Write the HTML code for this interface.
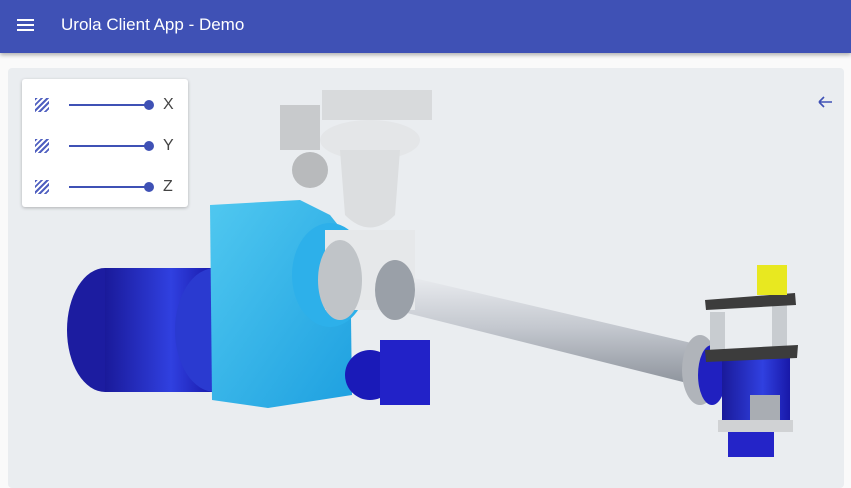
<!DOCTYPE html>
<html><head><meta charset="utf-8"><style>
*{margin:0;padding:0;box-sizing:border-box}
body{width:851px;height:472px;overflow:hidden;background:#fafafa;font-family:"Liberation Sans",sans-serif;position:relative}
.hdr{position:absolute;left:0;top:0;width:851px;height:53px;background:#3f51b5;box-shadow:0 2px 4px rgba(0,0,0,.3);color:#fff}
.hdr .t{position:absolute;left:61px;top:15px;font-size:17px}
.card{position:absolute;left:8px;top:68px;width:836px;height:420px;background:#eaedf0;border-radius:4px}
.panel{position:absolute;left:22px;top:79px;width:166px;height:128px;background:#fff;border-radius:3px;box-shadow:0 1px 3px rgba(0,0,0,.25)}
.row{position:absolute;left:0;width:166px;height:20px}
.hatch{position:absolute;left:13px;top:3px;width:14px;height:14px;background:repeating-linear-gradient(135deg,#5060c0 0 2px,transparent 2px 4px)}
.line{position:absolute;left:47px;top:9px;width:80px;height:2px;background:#3f51b5}
.knob{position:absolute;left:122px;top:5px;width:10px;height:10px;border-radius:50%;background:#3f51b5}
.lbl{position:absolute;left:141px;top:1px;font-size:16px;color:#444}
</style></head><body>
<div class="hdr">
<svg style="position:absolute;left:17px;top:18px" width="18" height="14"><rect y="1" width="17" height="2" fill="#fff"/><rect y="6" width="17" height="2" fill="#fff"/><rect y="11" width="17" height="2" fill="#fff"/></svg>
<div class="t">Urola Client App - Demo</div></div>
<div class="card"></div>
<svg style="position:absolute;left:0;top:0" width="851" height="472">
<defs>
<linearGradient id="sh" x1="0" y1="0" x2="0" y2="1"><stop offset="0" stop-color="#eef0f3"/><stop offset=".5" stop-color="#c4c8cf"/><stop offset="1" stop-color="#8d939c"/></linearGradient>
<linearGradient id="bl" x1="0" y1="0" x2="1" y2="0"><stop offset="0" stop-color="#1a1a9a"/><stop offset=".6" stop-color="#3040e0"/><stop offset="1" stop-color="#1818a8"/></linearGradient>
<linearGradient id="cy" x1="0" y1="0" x2="1" y2="1"><stop offset="0" stop-color="#50c8f0"/><stop offset="1" stop-color="#1ea0e0"/></linearGradient>
</defs>
<!-- shaft -->
<polygon points="380,270 700,345 695,385 375,305" fill="url(#sh)"/>
<!-- motor -->
<ellipse cx="105" cy="330" rx="38" ry="62" fill="#1c1ca0"/>
<rect x="105" y="268" width="110" height="124" fill="url(#bl)"/>
<ellipse cx="215" cy="330" rx="40" ry="62" fill="#2a3ad0"/>
<!-- gearbox -->
<polygon points="210,205 300,200 330,215 350,240 352,395 268,408 212,400" fill="url(#cy)"/>
<ellipse cx="330" cy="275" rx="38" ry="52" fill="#2db0ea"/>
<!-- hopper -->
<rect x="280" y="105" width="40" height="45" fill="#c8cacc"/>
<rect x="322" y="90" width="110" height="30" fill="#d8dadc"/>
<ellipse cx="370" cy="140" rx="50" ry="20" fill="#e4e6e8"/>
<path d="M340 150 L400 150 L395 215 Q370 240 345 215 Z" fill="#dcdee0"/>
<ellipse cx="310" cy="170" rx="18" ry="18" fill="#b8babc"/>
<rect x="325" y="230" width="90" height="80" fill="#e6e8ea"/>
<ellipse cx="340" cy="280" rx="22" ry="40" fill="#c0c4c8"/>
<ellipse cx="395" cy="290" rx="20" ry="30" fill="#9aa0a8"/>
<!-- small blue fan -->
<ellipse cx="370" cy="375" rx="25" ry="25" fill="#1a1ab8"/>
<rect x="380" y="340" width="50" height="65" fill="#2222c8"/>
<!-- right assembly -->
<ellipse cx="700" cy="370" rx="18" ry="35" fill="#b0b4ba"/>
<ellipse cx="712" cy="375" rx="14" ry="30" fill="#2020c0"/>
<rect x="722" y="355" width="68" height="75" fill="url(#bl)"/>
<rect x="750" y="395" width="30" height="30" fill="#a9adb3"/>
<rect x="718" y="420" width="75" height="12" fill="#d0d2d4"/>
<rect x="728" y="432" width="46" height="25" fill="#2424c8"/>
<rect x="710" y="312" width="15" height="40" fill="#c8ccd0"/>
<rect x="772" y="305" width="15" height="45" fill="#c8ccd0"/>
<polygon points="705,300 795,293 796,305 706,310" fill="#3c3c3c"/>
<polygon points="705,350 798,345 797,358 706,362" fill="#3c3c3c"/>
<rect x="757" y="265" width="30" height="30" fill="#e8e820"/>
<!-- back arrow -->
<path d="M819 102 H832 M819 102 L824 97 M819 102 L824 107" stroke="#3f51b5" stroke-width="1.6" fill="none"/>
</svg>
<div class="panel">
<div class="row" style="top:16px"><div class="hatch"></div><div class="line"></div><div class="knob"></div><div class="lbl">X</div></div>
<div class="row" style="top:57px"><div class="hatch"></div><div class="line"></div><div class="knob"></div><div class="lbl">Y</div></div>
<div class="row" style="top:98px"><div class="hatch"></div><div class="line"></div><div class="knob"></div><div class="lbl">Z</div></div>
</div>
</body></html>
